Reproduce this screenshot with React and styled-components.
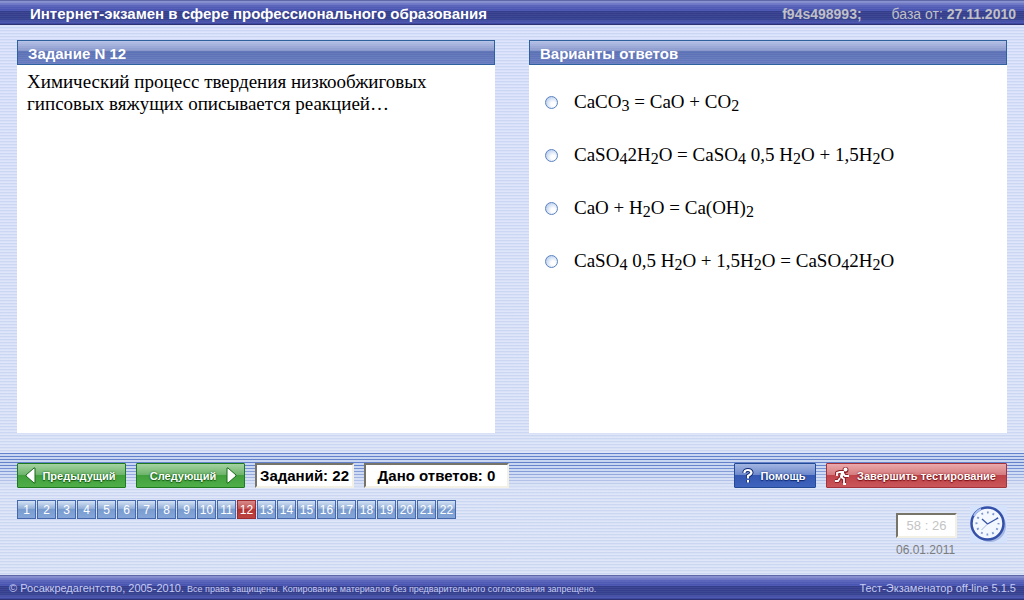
import React, { useState } from 'react';
import styled, { createGlobalStyle, css } from 'styled-components';

const GlobalStyle = createGlobalStyle`
  *, *::before, *::after {
    box-sizing: border-box;
  }
  body {
    margin: 0;
    background: #dce4f7;
    font-family: 'Liberation Sans', Arial, sans-serif;
  }
`;

const Page = styled.div`
  display: flex;
  flex-direction: column;
  min-height: 100vh;
  background:
    repeating-linear-gradient(to bottom, rgba(190, 204, 238, 0.6) 0 1px, rgba(190, 204, 238, 0.2) 1px 2px, transparent 2px 3px),
    linear-gradient(to bottom, #dfe5fd, #dfe7f7);
`;

const Bar = styled.div`
  display: flex;
  align-items: center;
  justify-content: space-between;
  height: 25px;
  flex: none;
  background:
    repeating-linear-gradient(to bottom, rgba(255, 255, 255, 0.05) 0 1px, transparent 1px 2px),
    linear-gradient(to bottom, #5560a4 0 1px, #8f97d4 1px, #5560b8 6px, #4450ae 11px, #343d8c 11px, #343f8e 19px, #4a55b0 22px, #3a449c 24px, #23296c 24px);
`;

const Header = styled(Bar)`
  padding: 2px 8px 0 30px;
`;

const Footer = styled(Bar)`
  padding: 0 8px 0 9px;
  color: #c6cbf4;
  font-size: 11px;
`;

const AppTitle = styled.h1`
  margin: 0;
  color: #fff;
  font-size: 15px;
  line-height: 16px;
`;

const SessionInfo = styled.div`
  display: flex;
  gap: 30px;
  color: #c0c0c8;
  font-size: 14px;
  line-height: 16px;
`;

const SmallPrint = styled.small`
  font-size: 9px;
`;

const Panels = styled.main`
  display: grid;
  grid-template-columns: 1fr 1fr;
  gap: 34px;
  flex: 1;
  padding: 15px 17px 20px;
`;

const Panel = styled.section`
  display: flex;
  flex-direction: column;
  background: #fff;
`;

const PanelTitle = styled.h2`
  height: 25px;
  margin: 0 0 1px;
  padding: 0 10px;
  border: 1px solid #2f619f;
  background:
    repeating-linear-gradient(to bottom, rgba(255, 255, 255, 0.06) 0 1px, transparent 1px 2px),
    linear-gradient(to bottom, #b5c0e6 0, #8696cb 10px, #5a70b4 10px, #667abf 100%);
  color: #fff;
  font-size: 15px;
  line-height: 25px;
`;

const Question = styled.p`
  margin: 0;
  padding: 5px 10px;
  max-width: 440px;
  font-family: 'Liberation Serif', 'Times New Roman', serif;
  font-size: 19px;
  line-height: 22px;
`;

const Answers = styled.form`
  display: flex;
  flex-direction: column;
  gap: 31px;
  padding: 25px 16px;
`;

const Answer = styled.label`
  display: flex;
  align-items: center;
  gap: 16px;
  font-family: 'Liberation Serif', 'Times New Roman', serif;
  font-size: 19px;
  line-height: 22px;
  cursor: pointer;

  sub {
    font-size: 16px;
    line-height: 0;
    vertical-align: -3px;
  }
`;

const Radio = styled.input`
  appearance: none;
  width: 13px;
  height: 13px;
  margin: 0;
  border: 1px solid #5c83c0;
  border-radius: 50%;
  background: radial-gradient(circle at 65% 65%, #fff 0 20%, #a3bfe8 100%);

  &:checked {
    background: radial-gradient(circle, #2a4c9c 0 35%, #e4edfb 45%);
  }
`;

const Controls = styled.section`
  padding: 10px 17px 18px;
  background:
    linear-gradient(to bottom, transparent 12px, rgba(222, 229, 247, 0.9) 34px) top / 100% 34px no-repeat,
    repeating-linear-gradient(to bottom, #6482cc 0 1px, #c8d6f2 1px 3px) top / 100% 34px no-repeat;
`;

const Row = styled.div`
  display: flex;
  align-items: center;
  gap: 10px;
`;

const StatusRow = styled.div`
  display: flex;
  align-items: flex-start;
  justify-content: space-between;
  padding-top: 12px;
`;

const Spacer = styled.div`
  flex: 1;
`;

const tones = {
  green: css`
    border-color: #1e7a1e;
    background: linear-gradient(to bottom, #a5d3a2 0, #6db36a 11px, #41a03c 11px, #4fae48 100%);
    text-shadow: 0 0 2px #145c14, 0 1px 1px #145c14;
  `,
  blue: css`
    border-color: #234a94;
    background: linear-gradient(to bottom, #a3b6e2 0, #6d88cb 11px, #3558b2 11px, #3f64bd 100%);
    text-shadow: 0 0 2px #0f2870, 0 1px 1px #0f2870;
  `,
  red: css`
    border-color: #a3323a;
    background: linear-gradient(to bottom, #eaa9ab 0, #d57b7e 11px, #bf4348 11px, #c9565a 100%);
    text-shadow: 0 0 2px #7c1218, 0 1px 1px #7c1218;
  `,
};

const Button = styled.button`
  display: flex;
  align-items: center;
  gap: 4px;
  width: ${props => props.$width}px;
  height: 25px;
  padding: 0 7px;
  border: 1px solid;
  border-radius: 1px;
  color: #fff;
  font: bold 11px 'Liberation Sans', Arial, sans-serif;
  white-space: nowrap;
  cursor: pointer;
  ${props => tones[props.$tone]}

  svg {
    flex: none;
  }
`;

const ButtonText = styled.span`
  flex: 1;
  text-align: center;
`;

const Readout = styled.div`
  width: ${props => props.$width}px;
  height: 25px;
  border: 2px solid;
  border-color: #77756a #f3f1e6 #f3f1e6 #77756a;
  background: #fff;
  color: ${props => (props.$muted ? '#c4c4c4' : '#000')};
  font-size: ${props => (props.$muted ? 13 : 15)}px;
  font-weight: ${props => (props.$muted ? 'normal' : 'bold')};
  line-height: 21px;
  text-align: center;
  white-space: nowrap;
`;

const Pager = styled.nav`
  display: flex;
  gap: 1px;
`;

const PageButton = styled.button`
  width: 19px;
  height: 19px;
  padding: 0;
  border: 1px solid ${props => (props.$current ? '#9c2a2e' : '#4468ab')};
  background: ${props => (props.$current
    ? 'linear-gradient(to bottom, #d98a8a 0, #c05050 8px, #b13434 8px, #bd4440 100%)'
    : 'linear-gradient(to bottom, #d3e2f5 0, #8facd6 8px, #789bce 8px, #86a6d8 100%)')};
  color: #fff;
  font: 12px 'Liberation Sans', Arial, sans-serif;
  cursor: pointer;
`;

const StatusArea = styled.div`
  display: flex;
  gap: 13px;
  padding-top: 6px;
`;

const Timer = styled.div`
  display: flex;
  flex-direction: column;
  gap: 5px;
  padding-top: 7px;
  color: #7c7c7c;
  font-size: 12px;
  line-height: 14px;
`;

const ClockFace = styled.svg`
  display: block;
  background: #d5e2fb;
`;

const tasks = Array.from({ length: 22 }, (_, i) => i + 1);

const answers = [
  <>CaCO<sub>3</sub> = CaO + CO<sub>2</sub></>,
  <>CaSO<sub>4</sub>2H<sub>2</sub>O = CaSO<sub>4</sub> 0,5 H<sub>2</sub>O + 1,5H<sub>2</sub>O</>,
  <>CaO + H<sub>2</sub>O = Ca(OH)<sub>2</sub></>,
  <>CaSO<sub>4</sub> 0,5 H<sub>2</sub>O + 1,5H<sub>2</sub>O = CaSO<sub>4</sub>2H<sub>2</sub>O</>,
];

const Arrow = ({ right }) => (
  <svg width="11" height="17" viewBox="0 0 11 17" aria-hidden="true">
    <path
      d={right ? 'M1 1h1l8 7v1l-8 7H1z' : 'M10 1H9L1 8v1l8 7h1z'}
      fill="#fff"
      stroke="#176817"
    />
  </svg>
);

const Runner = () => (
  <svg width="16" height="18" viewBox="0 0 16 18" aria-hidden="true">
    <g fill="none" stroke="#8c2026" strokeWidth="4" strokeLinejoin="round">
      <path d="M3 8V6l3-1h3l-2 5 3 2v4M9 6l2 3h3M6 11l-2 3H1" />
      <circle cx="11.500" cy="3" r="1" />
    </g>
    <g fill="none" stroke="#fff" strokeWidth="1.800">
      <path d="M3 9V6l3-1h3l-2 5 3 2v5h2M9 6l2 3h4M6 11l-2 3H1" />
    </g>
    <path d="M7 5h3v3l-2 3-2-1z" fill="#fff" />
    <circle cx="11.500" cy="2.500" r="2" fill="#fff" />
  </svg>
);

const HelpMark = () => (
  <svg width="12" height="16" viewBox="0 0 12 16" aria-hidden="true">
    <g fill="none" stroke="#0f2870" strokeWidth="4">
      <path d="M2.500 5V4Q3 2 6 2t3.500 2.500Q9.500 6 6 8v2.500M6 12v2.500" />
    </g>
    <g fill="none" stroke="#fff" strokeWidth="2.200">
      <path d="M2.500 5V4Q3 2 6 2t3.500 2.500Q9.500 6 6 8v2.500M6 12v2.500" />
    </g>
  </svg>
);

const Clock = () => (
  <ClockFace width="37" height="37" viewBox="0 0 37 37" aria-hidden="true">
    <circle cx="20" cy="20" r="16" fill="#8ea4d6" opacity="0.7" />
    <circle cx="17.500" cy="17.500" r="16" fill="#f3f7ff" stroke="#3450a8" strokeWidth="2.500" />
    <path d="M4 10a15 15 0 0 1 7-7" fill="none" stroke="#a9c0f0" strokeWidth="2" />
    <circle
      cx="17.500"
      cy="17.500"
      r="11"
      fill="none"
      stroke="#7d95d0"
      strokeWidth="2"
      strokeDasharray="1.800 3.960"
      strokeDashoffset="0.900"
    />
    <path d="M12 13l5.500 5L28 12" fill="none" stroke="#3854a6" strokeWidth="1.400" />
    <path d="M17.500 18l-6 6" fill="none" stroke="#a5b6e0" strokeWidth="1" />
  </ClockFace>
);

export default function App() {
  const [current, setCurrent] = useState(12);
  const [answer, setAnswer] = useState(null);

  const goTo = (task) => {
    setCurrent(Math.min(Math.max(task, 1), tasks.length));
    setAnswer(null);
  };

  return (
    <Page>
      <GlobalStyle />
      <Header as="header">
        <AppTitle>Интернет-экзамен в сфере профессионального образования</AppTitle>
        <SessionInfo>
          <b>f94s498993;</b>
          <span>база от: <b>27.11.2010</b></span>
        </SessionInfo>
      </Header>

      <Panels>
        <Panel>
          <PanelTitle>Задание N {current}</PanelTitle>
          <Question>
            Химический процесс твердения низкообжиговых гипсовых вяжущих описывается реакцией…
          </Question>
        </Panel>
        <Panel>
          <PanelTitle>Варианты ответов</PanelTitle>
          <Answers>
            {answers.map((formula, index) => (
              <Answer key={index}>
                <Radio
                  type="radio"
                  name="answer"
                  checked={answer === index}
                  onChange={() => setAnswer(index)}
                />
                <span>{formula}</span>
              </Answer>
            ))}
          </Answers>
        </Panel>
      </Panels>

      <Controls>
        <Row>
          <Button type="button" $tone="green" $width={109} onClick={() => goTo(current - 1)}>
            <Arrow />
            <ButtonText>Предыдущий</ButtonText>
          </Button>
          <Button type="button" $tone="green" $width={109} onClick={() => goTo(current + 1)}>
            <ButtonText>Следующий</ButtonText>
            <Arrow right />
          </Button>
          <Readout $width={99}>Заданий: 22</Readout>
          <Readout $width={145}>Дано ответов: 0</Readout>
          <Spacer />
          <Button type="button" $tone="blue" $width={82}>
            <HelpMark />
            <ButtonText>Помощь</ButtonText>
          </Button>
          <Button type="button" $tone="red" $width={181}>
            <Runner />
            <ButtonText>Завершить тестирование</ButtonText>
          </Button>
        </Row>
        <StatusRow>
          <Pager aria-label="Задания">
            {tasks.map(task => (
              <PageButton
                key={task}
                type="button"
                $current={task === current}
                onClick={() => goTo(task)}
              >
                {task}
              </PageButton>
            ))}
          </Pager>
          <StatusArea>
            <Timer>
              <Readout $width={61} $muted>58 : 26</Readout>
              <span>06.01.2011</span>
            </Timer>
            <Clock />
          </StatusArea>
        </StatusRow>
      </Controls>

      <Footer as="footer">
        <span>
          © Росаккредагентство, 2005-2010.{' '}
          <SmallPrint>
            Все права защищены. Копирование материалов без предварительного согласования запрещено.
          </SmallPrint>
        </span>
        <span>Тест-Экзаменатор off-line 5.1.5</span>
      </Footer>
    </Page>
  );
}
